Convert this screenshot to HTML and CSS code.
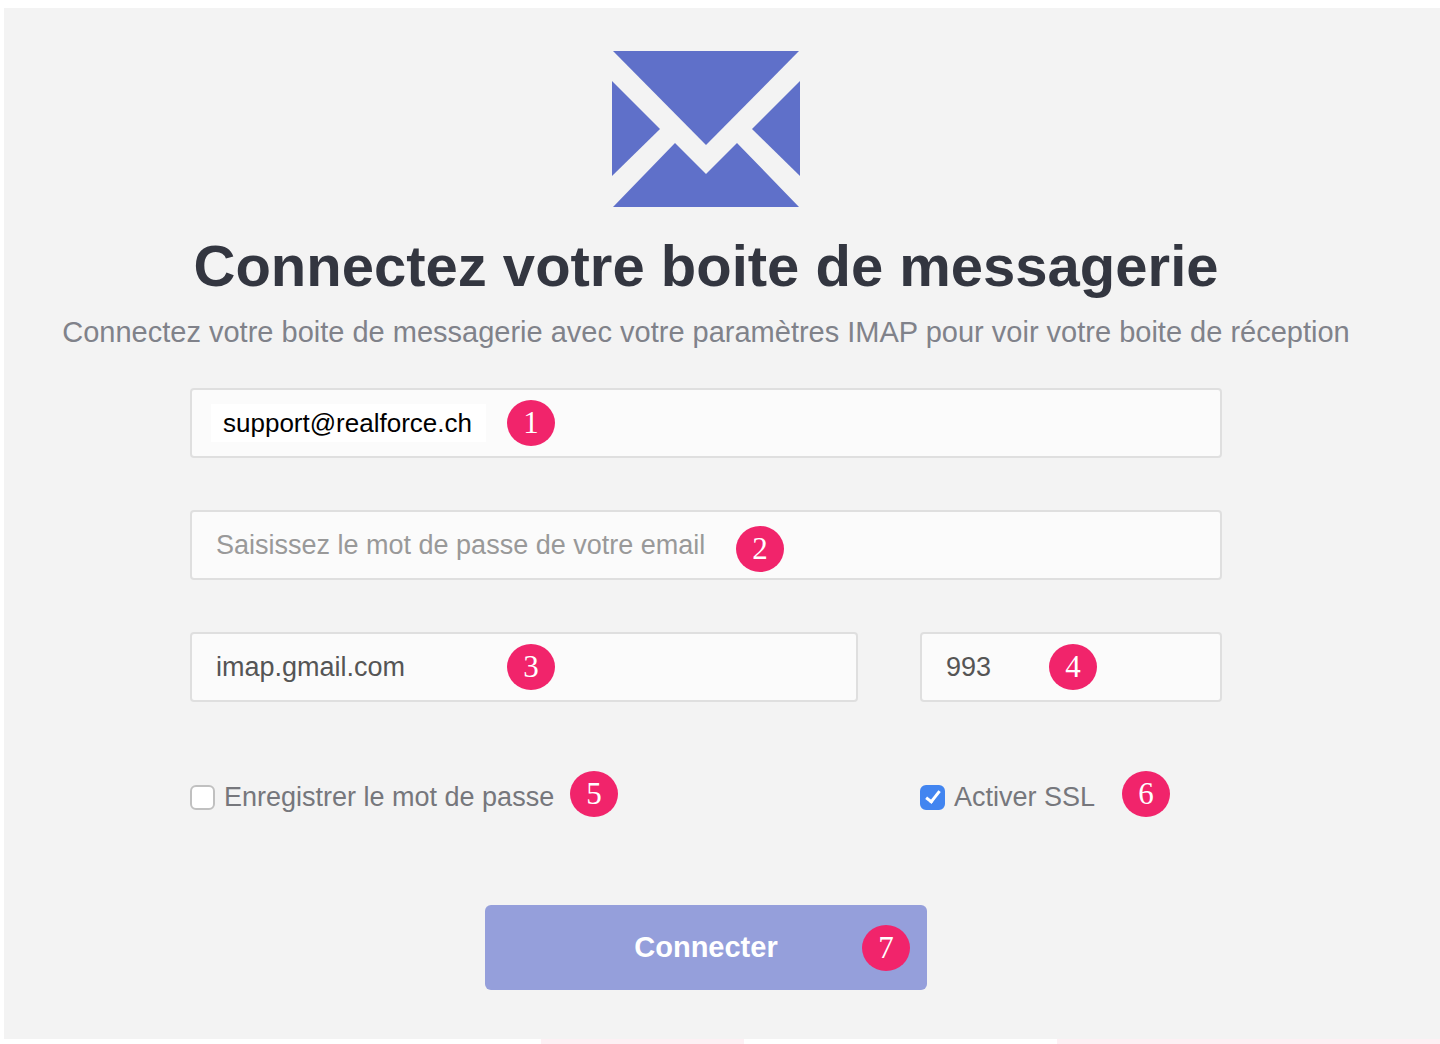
FILE: index.html
```html
<!DOCTYPE html>
<html lang="fr">
<head>
    <meta charset="UTF-8">
    <meta name="viewport" content="width=device-width, initial-scale=1.0">
    <title>Connectez votre boite de messagerie</title>
    <link rel="stylesheet" href="styles.css">
</head>
<body>
    <main class="panel">
        <svg class="mail-icon" viewBox="0 0 188 158" aria-hidden="true">
            <path d="M1 1H187L94 95Z"/>
            <path d="M0 31L48 79L0 126Z"/>
            <path d="M188 31L140 79L188 126Z"/>
            <path d="M1 157L63 93L94 124L125 93L187 157Z"/>
        </svg>
        <h1>Connectez votre boite de messagerie</h1>
        <p class="subtitle">Connectez votre boite de messagerie avec votre paramètres IMAP pour voir votre boite de réception</p>

        <form class="mail-form">
            <div class="field">
                <input class="email" type="email" value="support@realforce.ch" aria-label="Email">
                <span class="badge badge-email">1</span>
            </div>
            <div class="field">
                <input type="password" placeholder="Saisissez le mot de passe de votre email" aria-label="Mot de passe">
                <span class="badge badge-password">2</span>
            </div>
            <div class="row">
                <div class="field">
                    <input type="text" value="imap.gmail.com" aria-label="Serveur IMAP">
                    <span class="badge badge-server">3</span>
                </div>
                <div class="field">
                    <input type="text" value="993" aria-label="Port">
                    <span class="badge badge-port">4</span>
                </div>
            </div>
            <div class="row options">
                <div class="option">
                    <input type="checkbox" id="savePassword">
                    <label for="savePassword">Enregistrer le mot de passe</label>
                    <span class="badge badge-save">5</span>
                </div>
                <div class="option">
                    <input type="checkbox" id="enableSsl" checked>
                    <label for="enableSsl">Activer SSL</label>
                    <span class="badge badge-ssl">6</span>
                </div>
            </div>
            <button type="submit" class="btn">Connecter <span class="badge badge-submit">7</span></button>
        </form>
    </main>
    <div class="strip">
        <span></span>
        <span class="pink"></span>
        <span></span>
        <span class="pink"></span>
    </div>
</body>
</html>
```
FILE: styles.css
```css
* {
    box-sizing: border-box;
}

body {
    margin: 0;
    padding: 8px 0 0;
    min-height: 100vh;
    display: flex;
    flex-direction: column;
    background: #fff;
    font-family: "Liberation Sans", Arial, sans-serif;
}

.panel {
    margin-left: 4px;
    padding: 42px 32px 49px 0;
    background: #f3f3f3;
    display: flex;
    flex-direction: column;
    align-items: center;
}

.mail-icon {
    width: 188px;
    height: 158px;
    fill: #5f70c9;
}

h1 {
    margin: 26px 0 16px;
    font-size: 58px;
    line-height: 64px;
    color: #333640;
    text-align: center;
}

.subtitle {
    margin: 0 0 38px;
    font-size: 29px;
    line-height: 36px;
    color: #80828a;
    text-align: center;
}

.mail-form {
    width: 100%;
    max-width: 1032px;
    display: flex;
    flex-direction: column;
    gap: 52px;
}

.row {
    display: grid;
    grid-template-columns: 668fr 302fr;
    gap: 62px;
}

.field {
    position: relative;
    display: flex;
    align-items: center;
    height: 70px;
    padding: 0 19px;
    background: #fbfbfb;
    border: 2px solid #dfdfdf;
    border-radius: 4px;
}

.field input {
    width: 100%;
    height: 38px;
    padding: 0 5px;
    border: none;
    outline: none;
    background: transparent;
    font-family: inherit;
    font-size: 27px;
    color: #555;
}

.field input::placeholder {
    color: #999;
    opacity: 1;
}

.field .email {
    width: 275px;
    padding: 0 12px;
    background: #fff;
    font-size: 26px;
    color: #000;
}

.options {
    margin: 27px 0 40px;
}

.option {
    position: relative;
    display: flex;
    align-items: center;
    gap: 9px;
    font-size: 27px;
    line-height: 32px;
    color: #76777c;
}

.option input {
    appearance: none;
    width: 25px;
    height: 25px;
    margin: 0;
    display: flex;
    align-items: center;
    justify-content: center;
    background: #fff;
    border: 2px solid #c0c0c0;
    border-radius: 6px;
}

.option input:checked {
    background: #4285f0;
    border-color: #4285f0;
}

.option input:checked::after {
    content: "";
    width: 5px;
    height: 12px;
    margin-bottom: 3px;
    border: solid #fff;
    border-width: 0 3px 3px 0;
    transform: rotate(38deg);
}

.btn {
    position: relative;
    align-self: center;
    width: 442px;
    height: 85px;
    border: none;
    border-radius: 6px;
    background: #959fdb;
    font-family: inherit;
    font-size: 29px;
    font-weight: bold;
    color: #fff;
    cursor: pointer;
}

/* numbered markers over the controls */
.badge {
    position: absolute;
    top: 50%;
    width: 48px;
    height: 46px;
    margin-top: -23px;
    border-radius: 50%;
    background: #f1246b;
    font-family: "Liberation Serif", "Times New Roman", serif;
    font-size: 31px;
    font-weight: normal;
    line-height: 46px;
    text-align: center;
    color: #fff;
}

.badge-email,
.badge-server {
    left: 315px;
}

.badge-password {
    left: 544px;
    margin-top: -19px;
}

.badge-port {
    left: 127px;
}

.badge-save {
    left: 380px;
    margin-top: -26px;
}

.badge-ssl {
    left: 202px;
    margin-top: -26px;
}

.badge-submit {
    right: 17px;
}

.strip {
    flex: 1;
    min-height: 5px;
    display: grid;
    grid-template-columns: 541fr 203fr 313fr 383fr;
}

.pink {
    background: #fdf0f4;
}
```
